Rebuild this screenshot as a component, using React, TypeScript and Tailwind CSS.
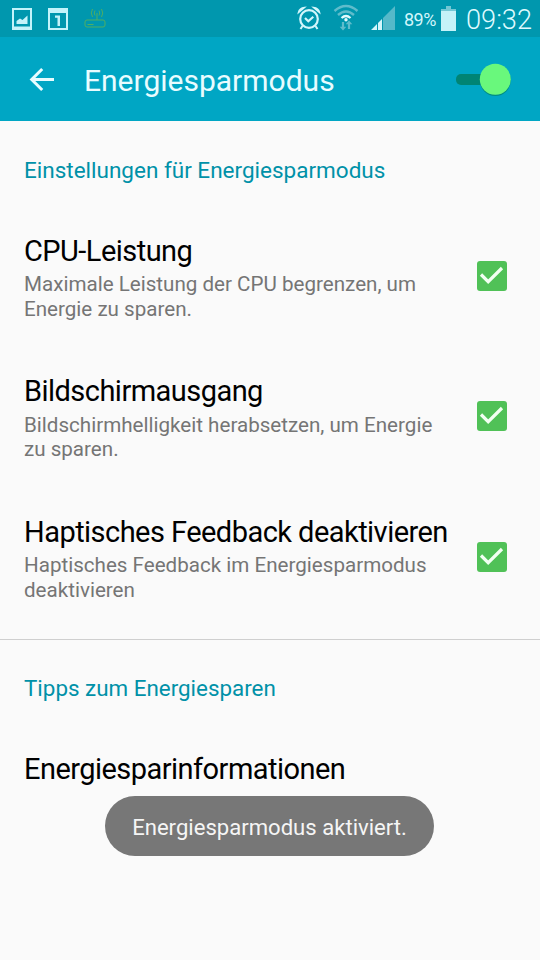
import { useState } from 'react';

interface Setting {
  id: string;
  title: string;
  summary: string[];
}

const SETTINGS: Setting[] = [
  {
    id: 'cpu',
    title: 'CPU-Leistung',
    summary: ['Maximale Leistung der CPU begrenzen, um', 'Energie zu sparen.'],
  },
  {
    id: 'display',
    title: 'Bildschirmausgang',
    summary: ['Bildschirmhelligkeit herabsetzen, um Energie', 'zu sparen.'],
  },
  {
    id: 'haptic',
    title: 'Haptisches Feedback deaktivieren',
    summary: ['Haptisches Feedback im Energiesparmodus', 'deaktivieren'],
  },
];

function ImageIcon() {
  return (
    <svg width="20" height="22" viewBox="0 0 20 22" fill="#c4f3fa">
      <path fillRule="evenodd" d="M0 0h20v22H0zM2 2v16.500h16V2z" />
      <path d="M4.500 16v-3l3.500-2.500 2.500 1.500 5-4.500V16z" />
    </svg>
  );
}

function CalendarIcon() {
  return (
    <svg width="20" height="22" viewBox="0 0 20 22" fill="#c4f3fa">
      <path fillRule="evenodd" d="M0 0h20v22H0zM2 5v15h16V5z" />
      <path d="M7 7.500h5V18H9.500V9.700H7z" />
    </svg>
  );
}

function RouterIcon() {
  return (
    <svg width="22" height="22" viewBox="0 0 22 22" fill="none" stroke="#4fae62" strokeWidth="1">
      <rect x="1" y="12" width="20" height="7" rx="2" />
      <path d="M3.500 16.500h6M13 12V5M11 2.500q-1.500 2.500 0 5M8.500 1q-2.500 4 0 8M15 2.500q1.500 2.500 0 5M17.500 1q2.500 4 0 8" />
    </svg>
  );
}

function AlarmIcon() {
  return (
    <svg width="24" height="24" viewBox="0 0 24 24" fill="none" stroke="#d3f6fb">
      <circle cx="12" cy="13" r="8.800" strokeWidth="2.200" />
      <path d="M1.500 6.500Q2.500 2 7.500 1.500zM22.500 6.500Q21.500 2 16.500 1.500z" fill="#d3f6fb" strokeWidth="1.500" />
      <path d="m8 12 3.300 3.300 5-4.600" strokeWidth="2.200" />
      <path d="m5.500 20-2 3M18.500 20l2 3" strokeWidth="2" />
    </svg>
  );
}

function WifiIcon() {
  return (
    <svg width="26" height="27" viewBox="0 0 26 27" fill="none">
      <path d="M1.500 7q11.500-10 23 0" stroke="#5fbccb" strokeWidth="2.400" />
      <path d="M5 11q8-7 16 0" stroke="#5fbccb" strokeWidth="2.400" />
      <path d="M8.500 14q4.500-4 9 0" stroke="#e2fafd" strokeWidth="2.200" />
      <circle cx="13" cy="15.800" r="1.700" fill="#e2fafd" />
      <path d="M10 26.500 6.700 22.800h2.200V18h2.200v4.800h2.200zM16 16.500l3.300 3.700h-2.200V25h-2.200v-4.800h-2.200z" fill="#5fbccb" />
    </svg>
  );
}

function SignalIcon() {
  return (
    <svg width="24" height="24" viewBox="0 0 24 24">
      <path d="M24 0v24H12V12z" fill="#55b9c9" />
      <path d="M6 18v6H0zM7 17l4-4v11H7z" fill="#d3f6fb" />
    </svg>
  );
}

function BatteryIcon() {
  return (
    <svg width="15" height="25" viewBox="0 0 15 25">
      <path d="M5 0h5v3h5v4H0V3h5z" fill="#74c7d4" />
      <path d="M0 5h15v20H0z" fill="#c5f2f8" />
    </svg>
  );
}

function StatusBar() {
  return (
    <div className="flex h-[37px] items-start bg-[#0097ae] text-[#d3f6fb]">
      <div className="flex gap-4 pt-2 pl-3">
        <ImageIcon />
        <CalendarIcon />
        <RouterIcon />
      </div>
      <div className="ml-auto flex pr-2">
        <div className="mt-1.5"><AlarmIcon /></div>
        <div className="mt-1 ml-3"><WifiIcon /></div>
        <div className="mt-1.5 ml-3"><SignalIcon /></div>
        <span className="mt-[9px] ml-[9px] w-[37px] text-[18px] leading-[22px] tracking-[-0.5px] whitespace-nowrap">89%</span>
        <div className="mt-[6px]"><BatteryIcon /></div>
        <span className="mt-[4px] ml-[10px] w-[66px] text-[27.2px] leading-8 font-light whitespace-nowrap text-[#dffafe]">09:32</span>
      </div>
    </div>
  );
}

function Switch({ on, onToggle }: { on: boolean; onToggle: () => void }) {
  return (
    <button role="switch" aria-checked={on} aria-label="Energiesparmodus" onClick={onToggle} className="mr-[28px] ml-auto">
      <svg width="56" height="34" viewBox="0 0 56 34" className="block">
        <rect x="0" y="12" width="38" height="11" rx="5" fill="#008474" />
        <circle cx={on ? 39.3 : 15.5} cy="18.500" r="15.500" fill="#008d83" />
        <circle cx={on ? 39.3 : 15.5} cy="17.300" r="15.500" fill={on ? '#69f87c' : '#eeeeee'} />
      </svg>
    </button>
  );
}

function Checkbox({ checked, label, onToggle }: { checked: boolean; label: string; onToggle: () => void }) {
  return (
    <button role="checkbox" aria-checked={checked} aria-label={label} onClick={onToggle} className="mt-[24px] mr-[33px] ml-auto shrink-0 self-start">
      <svg width="30" height="30" viewBox="0 0 30 30" fill="none" className="block">
        <rect width="30" height="30" rx="3" fill={checked ? '#50c157' : '#9e9e9e'} />
        {checked && <path d="m4 13.500 7.200 7.200L25 7" stroke="#f2fff2" strokeWidth="3.200" />}
      </svg>
    </button>
  );
}

export default function App() {
  const [enabled, setEnabled] = useState(true);
  const [checked, setChecked] = useState<Record<string, boolean>>({ cpu: true, display: true, haptic: true });

  return (
    <div className="relative h-[960px] w-[540px] overflow-hidden bg-[#fafafa] font-[Roboto,'Liberation_Sans',sans-serif]">
      <StatusBar />
      <header className="flex h-[84px] items-center bg-[#00a6c4]">
        <button aria-label="Zurück" className="ml-[29px]">
          <svg width="26" height="26" viewBox="0 0 26 26" fill="none" stroke="#e8fcff" strokeWidth="3" className="block">
            <path d="M25 13.500H3M13.200 3 2.700 13.500 13.200 24" />
          </svg>
        </button>
        <h1 className="ml-[29px] pt-[3px] text-[30px] leading-9 text-[#e8fcff]">Energiesparmodus</h1>
        <Switch on={enabled} onToggle={() => setEnabled(!enabled)} />
      </header>

      <main>
        <h2 className="h-[116px] px-6 pt-9 text-[22.5px] leading-[27px] text-[#0091a8]">Einstellungen für Energiesparmodus</h2>
        {SETTINGS.map((s) => (
          <div key={s.id} className="flex h-[140.4px] pl-6">
            <div className="whitespace-nowrap">
              <div className="text-[29px] leading-7 tracking-[-0.54px] text-black">{s.title}</div>
              <div className="mt-[7.3px] text-[20.6px] leading-[24.6px] text-[#757575]">
                {s.summary.map((line) => (
                  <div key={line}>{line}</div>
                ))}
              </div>
            </div>
            <Checkbox
              checked={checked[s.id]}
              label={s.title}
              onToggle={() => setChecked((c) => ({ ...c, [s.id]: !c[s.id] }))}
            />
          </div>
        ))}
        <div className="-mt-[19.200px] border-t border-[#cfcfcf]" />
        <h2 className="px-6 pt-[35px] text-[22.4px] leading-[27px] text-[#0091a8]">Tipps zum Energiesparen</h2>
        <div className="px-6 pt-[53.5px] text-[29px] leading-7 tracking-[-0.54px] text-black">Energiesparinformationen</div>
      </main>

      <div className="absolute top-[796px] left-[105px] flex h-[60px] w-[329px] items-center justify-center rounded-full bg-[#777777] pt-[3px] text-[22.1px] whitespace-nowrap text-[#f5f5f5]">
        Energiesparmodus aktiviert.
      </div>
    </div>
  );
}
